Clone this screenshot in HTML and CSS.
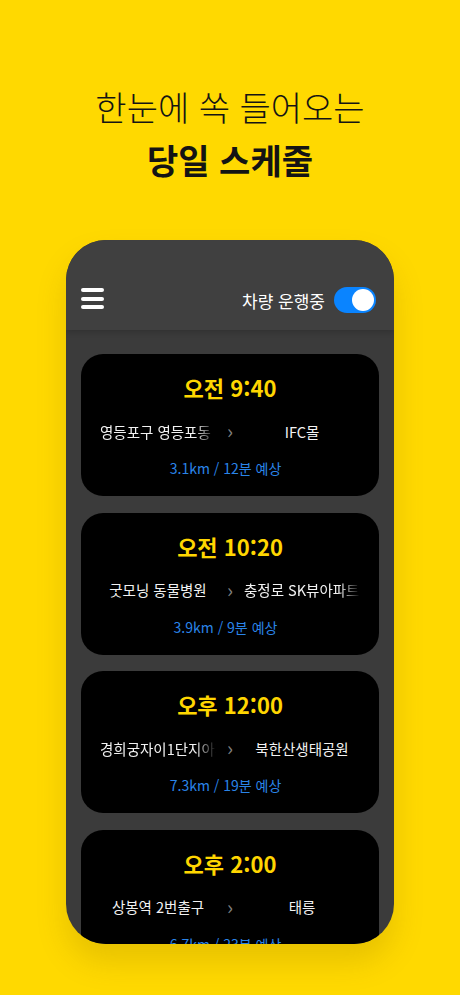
FILE: index.html
```html
<!DOCTYPE html>
<html lang="ko">
<head>
    <meta charset="UTF-8">
    <meta name="viewport" content="width=device-width, initial-scale=1.0">
    <title>당일 스케줄</title>
    <link rel="stylesheet" href="styles.css">
</head>
<body>
    <div class="headline">
        <p class="headline-light">한눈에 쏙 들어오는</p>
        <p class="headline-bold">당일 스케줄</p>
    </div>

    <div class="phone">
        <div class="topbar">
            <div class="menu-btn">
                <span></span>
                <span></span>
                <span></span>
            </div>
            <div class="status">
                <span class="status-label">차량 운행중</span>
                <div class="toggle"><div class="knob"></div></div>
            </div>
        </div>

        <div class="schedule">
            <div class="card">
                <div class="time">오전 9:40</div>
                <div class="route">
                    <div class="place fade">영등포구 영등포동</div>
                    <div class="arrow">&#8250;</div>
                    <div class="place">IFC몰</div>
                </div>
                <div class="distance">3.1km / 12분 예상</div>
            </div>
            <div class="card">
                <div class="time">오전 10:20</div>
                <div class="route">
                    <div class="place">굿모닝 동물병원</div>
                    <div class="arrow">&#8250;</div>
                    <div class="place fade">충정로 SK뷰아파트</div>
                </div>
                <div class="distance">3.9km / 9분 예상</div>
            </div>
            <div class="card">
                <div class="time">오후 12:00</div>
                <div class="route">
                    <div class="place fade">경희궁자이1단지아파트</div>
                    <div class="arrow">&#8250;</div>
                    <div class="place">북한산생태공원</div>
                </div>
                <div class="distance">7.3km / 19분 예상</div>
            </div>
            <div class="card">
                <div class="time">오후 2:00</div>
                <div class="route">
                    <div class="place">상봉역 2번출구</div>
                    <div class="arrow">&#8250;</div>
                    <div class="place">태릉</div>
                </div>
                <div class="distance">6.7km / 23분 예상</div>
            </div>
        </div>
    </div>
</body>
</html>
```

FILE: styles.css
```css
* {
    margin: 0;
    padding: 0;
    box-sizing: border-box;
    font-family: 'Noto Sans CJK KR', 'Noto Sans', sans-serif;
}

body {
    background: #ffd900;
    height: 995px;
    overflow: hidden;
}

.headline {
    text-align: center;
    padding-top: 80px;
    color: #141414;
    font-size: 34px;
    line-height: 53px;
}

.headline-light {
    font-weight: 300;
}

.headline-bold {
    font-weight: 700;
}

.phone {
    width: 328px;
    height: 704px;
    margin: 54px auto 0;
    background: #3b3b3b;
    border-radius: 40px;
    overflow: hidden;
    box-shadow: 0 18px 30px rgba(120, 90, 0, 0.18);
}

.topbar {
    height: 90px;
    background: #404040;
    display: flex;
    align-items: flex-end;
    justify-content: space-between;
    padding: 0 18px 16px 15px;
    box-shadow: 0 2px 6px rgba(0, 0, 0, 0.18);
    position: relative;
}

.menu-btn {
    width: 23px;
    height: 21px;
    margin-bottom: 5px;
    display: flex;
    flex-direction: column;
    justify-content: space-between;
}

.menu-btn span {
    display: block;
    height: 4px;
    border-radius: 2px;
    background: #ffffff;
}

.status {
    display: flex;
    align-items: center;
    gap: 9px;
    margin-bottom: 1px;
}

.status-label {
    color: #ffffff;
    font-size: 17px;
}

.toggle {
    width: 42px;
    height: 26px;
    border-radius: 13px;
    background: #0a84ff;
    padding: 2px;
    display: flex;
    justify-content: flex-end;
}

.knob {
    width: 22px;
    height: 22px;
    border-radius: 50%;
    background: #ffffff;
}

.schedule {
    padding: 24px 15px;
    display: flex;
    flex-direction: column;
    gap: 16.5px;
}

.card {
    height: 142px;
    background: #000000;
    border-radius: 22px;
    text-align: center;
    padding-top: 16px;
}

.time {
    color: #ffd600;
    font-size: 22px;
    font-weight: 700;
    line-height: 34px;
}

.route {
    display: flex;
    align-items: center;
    justify-content: center;
    margin-top: 16px;
    height: 22px;
}

.place {
    width: 116px;
    color: #f2f2f2;
    font-size: 14.5px;
    white-space: nowrap;
    overflow: hidden;
}

.place.fade {
    text-align: left;
    -webkit-mask-image: linear-gradient(to right, #000 82%, transparent 100%);
    mask-image: linear-gradient(to right, #000 82%, transparent 100%);
}

.arrow {
    width: 28px;
    color: #808080;
    font-size: 20px;
    line-height: 22px;
}

.distance {
    color: #2a84e8;
    font-size: 14px;
    margin-top: 16px;
    padding-right: 9px;
}
```
